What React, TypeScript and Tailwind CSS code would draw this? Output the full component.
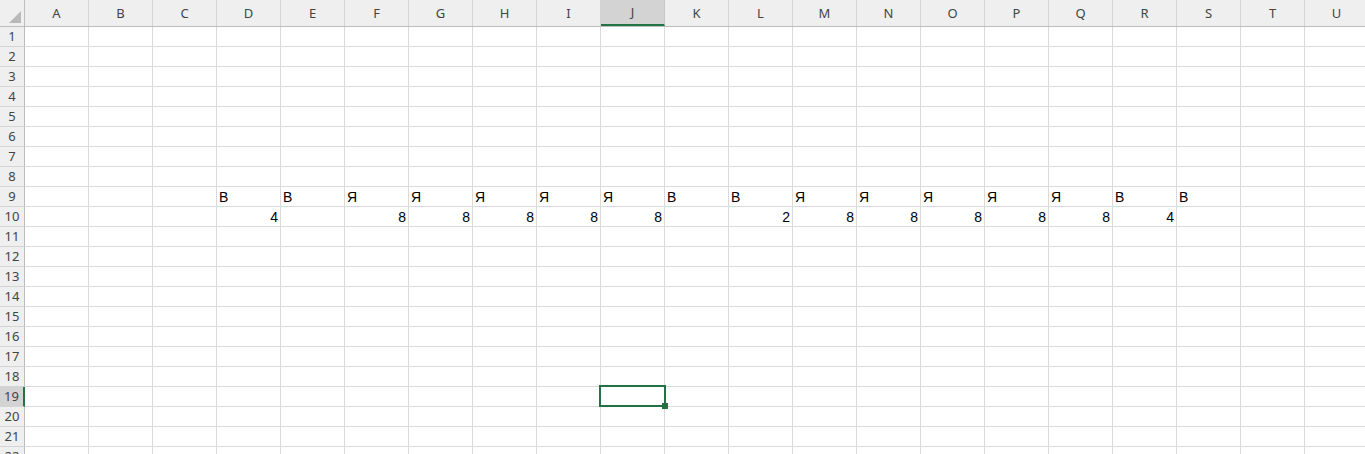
import React from "react";

const COLS = "ABCDEFGHIJKLMNOPQRSTU".split("");
const ROW9: Record<string, string> = {
  D: "В", E: "В", F: "Я", G: "Я", H: "Я", I: "Я", J: "Я", K: "В",
  L: "В", M: "Я", N: "Я", O: "Я", P: "Я", Q: "Я", R: "В", S: "В",
};
const ROW10: Record<string, string> = {
  D: "4", F: "8", G: "8", H: "8", I: "8", J: "8",
  L: "2", M: "8", N: "8", O: "8", P: "8", Q: "8", R: "4",
};

export default function App() {
  const rows = Array.from({ length: 22 }, (_, i) => i + 1);
  return (
    <div className="w-[1365px] h-[454px] overflow-hidden bg-white" style={{ fontFamily: "'Liberation Sans', Arial, sans-serif" }}>
      <div className="flex flex-col w-[1369px]">
        {/* Header row */}
        <div className="flex h-[27px] bg-[#efefef] border-b border-[#bdbdbd]">
          <div className="relative w-[25px] shrink-0 border-r border-[#bdbdbd]">
            <svg className="absolute right-[3px] bottom-[3px]" width="12" height="12" viewBox="0 0 12 12">
              <polygon points="12,0 12,12 0,12" fill="#b9b9b9" />
            </svg>
          </div>
          {COLS.map((c) => (
            <div
              key={c}
              className={
                "w-[64px] shrink-0 flex items-center justify-center border-r text-[#444] pt-[1px] " +
                (c === "J"
                  ? "bg-[#d3d3d3] border-[#c6c6c6] border-b-2 border-b-[#217346]"
                  : "border-[#d4d4d4]")
              }
              style={{ fontFamily: "'Noto Sans', 'Open Sans', sans-serif", fontSize: "13px" }}
            >
              {c}
            </div>
          ))}
        </div>
        {rows.map((r) => (
          <div key={r} className="flex h-[20px]">
            <div
              className={
                "w-[25px] shrink-0 flex items-center justify-center border-b border-[#d4d4d4] text-[#444] pt-[1px] " +
                (r === 19
                  ? "bg-[#d3d3d3] border-r-2 border-r-[#217346]"
                  : "bg-[#efefef] border-r border-r-[#bdbdbd]")
              }
              style={{ fontFamily: "'Noto Sans', 'Open Sans', sans-serif", fontSize: "13px" }}
            >
              {r}
            </div>
            {COLS.map((c) => {
              const txt = r === 9 ? ROW9[c] : r === 10 ? ROW10[c] : undefined;
              const isNum = r === 10;
              return (
                <div
                  key={c}
                  className={
                    "relative w-[64px] shrink-0 border-r border-b border-[#dadada] text-[14px] leading-[18px] text-black px-[2px] flex items-end " +
                    (isNum ? "justify-end" : "justify-start")
                  }
                >
                  {txt}
                  {r === 19 && c === "J" && (
                    <div className="absolute -top-[2px] -left-[2px] w-[67px] h-[22px] border-2 border-[#217346] z-10">
                      <div className="absolute -right-[4px] -bottom-[4px] w-[6px] h-[6px] bg-[#217346]" />
                    </div>
                  )}
                </div>
              );
            })}
          </div>
        ))}
      </div>
    </div>
  );
}
